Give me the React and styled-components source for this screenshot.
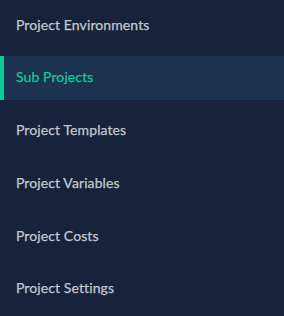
import styled, { createGlobalStyle } from "styled-components";

const GlobalStyle = createGlobalStyle`
  html, body {
    margin: 0;
    padding: 0;
    background: #17233a;
  }
  body {
    font-family: "Lato", "Open Sans", sans-serif;
  }
`;

const Nav = styled.nav`
  width: 284px;
  height: 316px;
  background: #17233a;
  display: flex;
  flex-direction: column;
  gap: 8.8px;
  padding-top: 3px;
  box-sizing: border-box;
`;

const Item = styled.a`
  display: flex;
  align-items: center;
  height: 44px;
  box-sizing: border-box;
  padding-bottom: 2px;
  font-size: 14px;
  font-weight: 400;
  letter-spacing: 0.1px;
  -webkit-text-stroke: 0.25px currentColor;
  text-decoration: none;
  color: ${(p) => (p.$active ? "#15c99b" : "#c3c8cf")};
  background: ${(p) => (p.$active ? "#1b3251" : "transparent")};
  border-left: 4px solid ${(p) => (p.$active ? "#13c999" : "transparent")};
  padding-left: 12px;
  cursor: pointer;
`;

const items = [
  "Project Environments",
  "Sub Projects",
  "Project Templates",
  "Project Variables",
  "Project Costs",
  "Project Settings",
];

const App = () => {
  return (
    <>
      <GlobalStyle />
      <Nav>
        {items.map((label) => (
          <Item key={label} $active={label === "Sub Projects"}>
            {label}
          </Item>
        ))}
      </Nav>
    </>
  );
};

export default App;
